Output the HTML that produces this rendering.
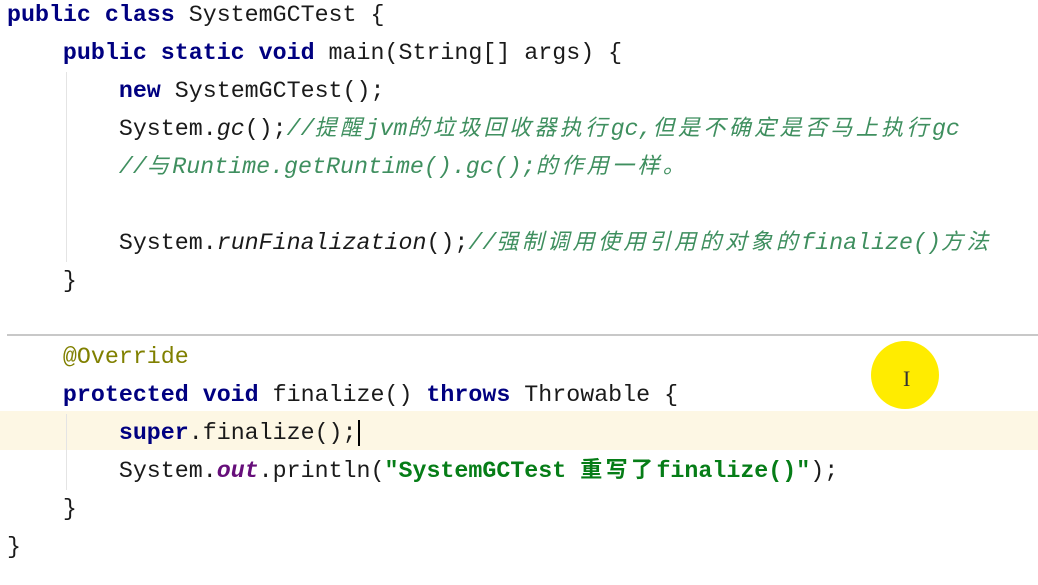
<!DOCTYPE html>
<html><head><meta charset="utf-8"><style>
body{margin:0;width:1038px;height:585px;background:#fff;position:relative;overflow:hidden;font-family:"Liberation Mono","Noto Sans CJK SC",monospace;font-size:23.3px;color:#1a1a1a}
.l{position:absolute;left:7px;height:38px;line-height:38px;white-space:pre}
.k{color:#000080;font-weight:bold}
.cm{color:#3f8f5f;font-style:italic}
.c{letter-spacing:3.4px;font-family:"Noto Sans CJK SC",sans-serif;font-size:22px;line-height:1;vertical-align:baseline}
.s{color:#067d17;font-weight:bold}
.a{color:#808000}
.i{font-style:italic}
.o{color:#660e7a;font-weight:bold;font-style:italic}
.g{position:absolute;width:1px;background:#e4e4e4}
</style></head><body>
<div style="position:absolute;left:0;top:411px;width:1038px;height:39px;background:#fdf7e4"></div>
<div style="position:absolute;left:7px;top:334px;width:1031px;height:2px;background:#c8c8c8"></div>
<div class="g" style="left:66px;top:72px;height:190px"></div>
<div class="g" style="left:66px;top:414px;height:76px"></div>
<div style="position:absolute;left:871px;top:341px;width:68px;height:68px;border-radius:50%;background:#ffec00"></div>
<div style="position:absolute;left:903px;top:366px;font:22px 'Liberation Serif',serif;color:#333">I</div>
<div class="l" style="top:-4px"><span class="k">public class</span> SystemGCTest {</div>
<div class="l" style="top:34px">    <span class="k">public static void</span> main(String[] args) {</div>
<div class="l" style="top:72px">        <span class="k">new</span> SystemGCTest();</div>
<div class="l" style="top:110px">        System.<span class="i">gc</span>();<span class="cm">//<span class="c">提醒</span>jvm<span class="c">的垃圾回收器执行</span>gc,<span class="c">但是不确定是否马上执行</span>gc</span></div>
<div class="l" style="top:148px">        <span class="cm">//<span class="c">与</span>Runtime.getRuntime().gc();<span class="c">的作用一样。</span></span></div>
<div class="l" style="top:224px">        System.<span class="i">runFinalization</span>();<span class="cm">//<span class="c">强制调用使用引用的对象的</span>finalize()<span class="c">方法</span></span></div>
<div class="l" style="top:262px">    }</div>
<div class="l" style="top:338px">    <span class="a">@Override</span></div>
<div class="l" style="top:376px">    <span class="k">protected void</span> finalize() <span class="k">throws</span> Throwable {</div>
<div class="l" style="top:414px">        <span class="k">super</span>.finalize();<span style="border-left:2px solid #000;margin-left:1px"></span></div>
<div class="l" style="top:452px">        System.<span class="o">out</span>.println(<span class="s">"SystemGCTest <span class="c" style="font-weight:bold">重写了</span>finalize()"</span>);</div>
<div class="l" style="top:490px">    }</div>
<div class="l" style="top:528px">}</div>
</body></html>
